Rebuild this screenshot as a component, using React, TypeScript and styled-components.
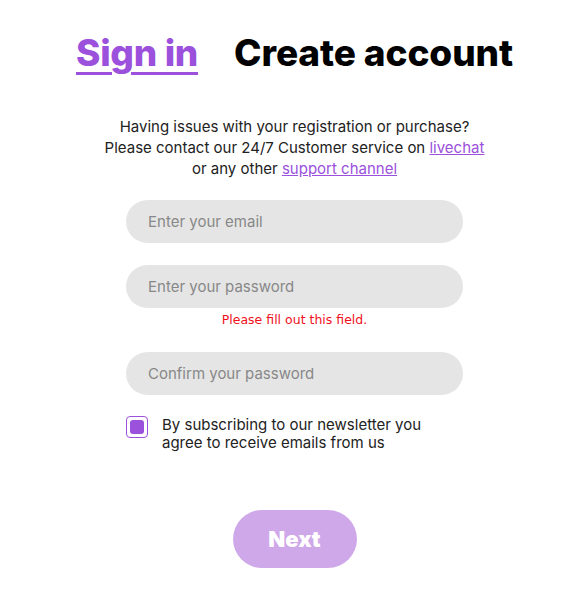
import styled, { createGlobalStyle } from "styled-components";

const GlobalStyle = createGlobalStyle`
  body {
    margin: 0;
    background: #fff;
    font-family: "Inter", "Liberation Sans", sans-serif;
  }
`;

const Page = styled.div`
  display: flex;
  flex-direction: column;
  align-items: center;
  padding: 30px 0 0 10px;
`;

const Tabs = styled.div`
  display: flex;
  gap: 36px;
  align-items: baseline;
`;

const Tab = styled.a<{ $active?: boolean }>`
  font-size: 37px;
  font-weight: 800;
  letter-spacing: ${({ $active }) => ($active ? "-0.3px" : "-0.1px")};
  color: ${({ $active }) => ($active ? "#9b51dc" : "#000")};
  text-decoration: ${({ $active }) => ($active ? "underline" : "none")};
  text-underline-offset: 6px;
  text-decoration-thickness: 3px;
  cursor: pointer;
`;

const Info = styled.p`
  margin: 41px 0 0;
  font-size: 15px;
  line-height: 21px;
  color: #222;
  text-align: center;
`;

const InfoLink = styled.a`
  color: #9b51dc;
  text-decoration: underline;
  cursor: pointer;
`;

const Form = styled.form`
  display: flex;
  flex-direction: column;
  align-items: center;
  width: 337px;
  margin-top: 21px;
`;

const Field = styled.div<{ $gap: number }>`
  display: flex;
  flex-direction: column;
  align-items: center;
  width: 100%;
  margin-bottom: ${({ $gap }) => $gap}px;
`;

const Input = styled.input`
  box-sizing: border-box;
  width: 100%;
  height: 43px;
  border: none;
  border-radius: 22px;
  background: #e5e5e5;
  padding: 0 22px;
  font-family: inherit;
  font-size: 15px;
  color: #333;
  outline: none;
  &::placeholder {
    color: #888;
  }
`;

const ErrorText = styled.span`
  margin-top: 4px;
  font-family: "DejaVu Sans", "Liberation Sans", sans-serif;
  font-size: 12.5px;
  color: #f0101c;
`;

const CheckRow = styled.label`
  display: flex;
  gap: 14px;
  align-self: stretch;
  margin-top: 21px;
  font-size: 15px;
  line-height: 18px;
  color: #222;
  cursor: pointer;
`;

const CheckBox = styled.span`
  box-sizing: border-box;
  flex: none;
  width: 22px;
  height: 22px;
  border: 1.5px solid #9b51dc;
  border-radius: 4px;
  display: flex;
  align-items: center;
  justify-content: center;
  &::after {
    content: "";
    width: 14px;
    height: 14px;
    border-radius: 3px;
    background: #9b51dc;
  }
`;

const CheckText = styled.span`
  width: 270px;
`;

const NextButton = styled.button`
  margin-top: 58px;
  width: 124px;
  height: 58px;
  border: none;
  border-radius: 29px;
  background: #cfa8ea;
  color: #fff;
  font-family: inherit;
  font-size: 22px;
  font-weight: 900;
  cursor: pointer;
`;

export default function App() {
  return (
    <>
      <GlobalStyle />
      <Page>
        <Tabs>
          <Tab $active>Sign in</Tab>
          <Tab>Create account</Tab>
        </Tabs>
        <Info>
          Having issues with your registration or purchase?
          <br />
          Please contact our 24/7 Customer service on <InfoLink>livechat</InfoLink>
          <br />
          or any other <InfoLink>support channel</InfoLink>
        </Info>
        <Form onSubmit={(e) => e.preventDefault()}>
          <Field $gap={22}>
            <Input type="email" placeholder="Enter your email" />
          </Field>
          <Field $gap={25}>
            <Input type="password" placeholder="Enter your password" />
            <ErrorText>Please fill out this field.</ErrorText>
          </Field>
          <Field $gap={0}>
            <Input type="password" placeholder="Confirm your password" />
          </Field>
          <CheckRow>
            <CheckBox />
            <CheckText>
              By subscribing to our newsletter you agree to receive emails from us
            </CheckText>
          </CheckRow>
          <NextButton type="submit">Next</NextButton>
        </Form>
      </Page>
    </>
  );
}
